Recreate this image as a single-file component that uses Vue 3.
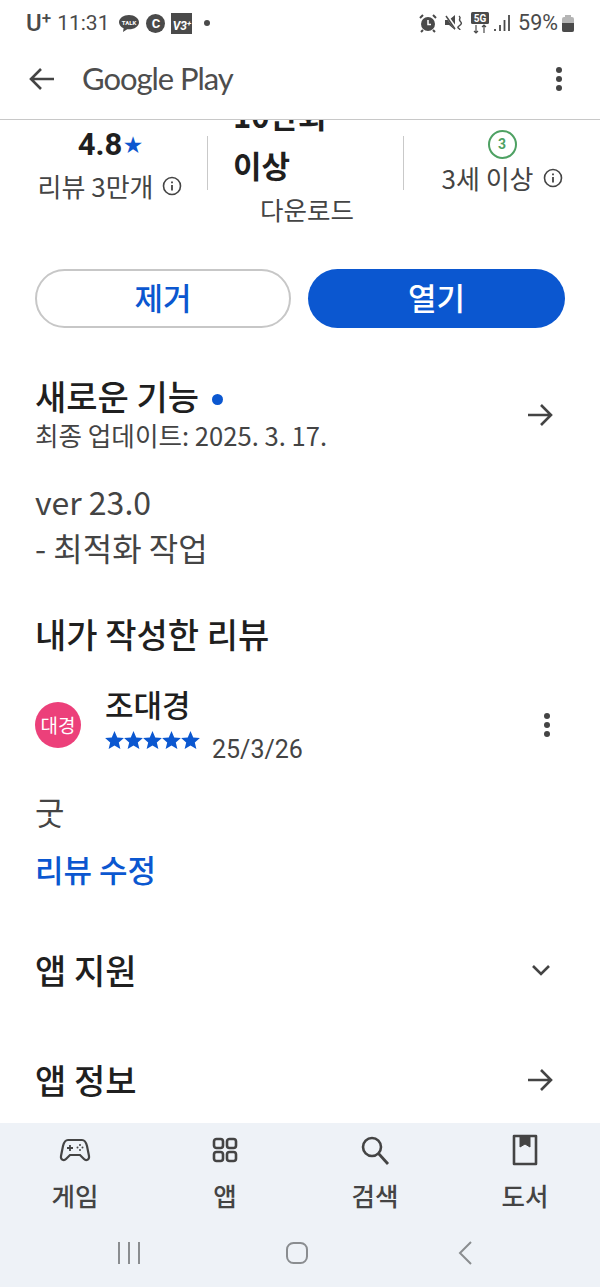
<script setup>
const navItems = [
  { label: '게임', icon: 'game' },
  { label: '앱', icon: 'apps' },
  { label: '검색', icon: 'search' },
  { label: '도서', icon: 'book' }
]
const stars = [1, 2, 3, 4, 5]
</script>

<template>
  <div class="phone">
    <div class="status">
      <div class="status-left">
        <span class="carrier">U<sup>+</sup></span>
        <span class="time">11:31</span>
        <svg class="si" width="22" height="20" viewBox="0 0 22 20"><path d="M11 2C5.500 2 1 5.200 1 9.200c0 2.600 1.900 4.800 4.600 6.100L5 19l4.200-2.800c.6.100 1.200.100 1.800.100 5.500 0 10-3.200 10-7.100S16.500 2 11 2z" fill="#4a4a4a"/><text x="11" y="11.500" class="talk">TALK</text></svg>
        <span class="c-badge">C</span>
        <span class="v-badge">V3<small>+</small></span>
        <span class="dot"></span>
      </div>
      <div class="status-right">
        <svg width="18" height="20" viewBox="0 0 18 20"><circle cx="9" cy="11" r="7" fill="#4a4a4a"/><path d="M1 5l3-3M17 5l-3-3M4 17l-2 2M14 17l2 2" stroke="#4a4a4a" stroke-width="2"/><path d="M9 7v4.500h3" stroke="#fff" stroke-width="1.500" fill="none"/></svg>
        <svg class="ml8" width="18" height="20" viewBox="0 0 18 20"><path d="M0 7h4l6-5v15l-6-5H0z" fill="#4a4a4a"/><path d="M1 2l11 15" stroke="#fff" stroke-width="3"/><path d="M1 3l9 13" stroke="#4a4a4a" stroke-width="1.500"/><path d="M14 3c3 2-1 3 1 5s2 3-1 5 1 2 1 4" stroke="#4a4a4a" stroke-width="1.500" fill="none"/></svg>
        <svg class="ml8" width="18" height="22" viewBox="0 0 18 22"><rect width="18" height="12" rx="1.500" fill="#4a4a4a"/><text x="9" y="10" class="fiveg">5G</text><path d="M5 13v8M3 19l2 2 2-2M13 21v-8M11 15l2-2 2 2" stroke="#4a4a4a" stroke-width="1.200" fill="none"/></svg>
        <svg class="ml5" width="16" height="18" viewBox="0 0 16 18"><path d="M1 15v2M6 11v6M10.500 6v11M15 1v16" stroke="#4a4a4a" stroke-width="1.800"/></svg>
        <span class="pct">59%</span>
        <span class="battery"><i></i></span>
      </div>
    </div>

    <header class="appbar">
      <svg width="26" height="24" viewBox="0 0 26 24"><path d="M25 12H2M12 2 2 12l10 10" stroke="#444" stroke-width="2.600" fill="none"/></svg>
      <span class="brand">Google Play</span>
      <span class="kebab"><i></i><i></i><i></i></span>
    </header>

    <main class="content">
      <section class="stats">
        <div class="stat first">
          <div class="rating">4.8<span class="star">★</span></div>
          <div class="stat-label">리뷰 3만개
            <svg class="info" width="20" height="20" viewBox="0 0 20 20"><circle cx="10" cy="10" r="8.500" fill="none" stroke="#444" stroke-width="1.600"/><path d="M10 9v5.500M10 5.500v1.800" stroke="#444" stroke-width="1.800"/></svg>
          </div>
        </div>
        <div class="stat second">
          <div class="downloads">10만회<br>이상</div>
          <div class="stat-label dl-label">다운로드</div>
        </div>
        <div class="stat third">
          <div class="age">3</div>
          <div class="stat-label">3세 이상
            <svg class="info" width="20" height="20" viewBox="0 0 20 20"><circle cx="10" cy="10" r="8.500" fill="none" stroke="#444" stroke-width="1.600"/><path d="M10 9v5.500M10 5.500v1.800" stroke="#444" stroke-width="1.800"/></svg>
          </div>
        </div>
      </section>

      <section class="actions">
        <button class="btn outline">제거</button>
        <button class="btn solid">열기</button>
      </section>

      <section class="whatsnew">
        <div class="row">
          <div>
            <h2>새로운 기능<span class="bluedot"></span></h2>
            <div class="updated">최종 업데이트: 2025. 3. 17.</div>
          </div>
          <svg class="arrow" width="26" height="24" viewBox="0 0 26 24"><path d="M1 12h22M14 2l10 10-10 10" stroke="#444" stroke-width="2.600" fill="none"/></svg>
        </div>
        <p class="notes">ver 23.0<br>- 최적화 작업</p>
      </section>

      <section class="review">
        <h2>내가 작성한 리뷰</h2>
        <div class="author">
          <div class="avatar">대경</div>
          <div class="who">
            <div class="name">조대경</div>
            <div class="meta">
              <span class="stars"><svg v-for="s in stars" :key="s" width="19" height="18" viewBox="0 0 24 23"><path d="M12 0l3.500 8.200 8.500.7-6.500 5.700 2 8.400-7.500-4.500L4.500 23l2-8.400L0 8.900l8.500-.7z" fill="#0b57d0"/></svg></span>
              <span class="date">25/3/26</span>
            </div>
          </div>
          <span class="kebab"><i></i><i></i><i></i></span>
        </div>
        <p class="body">굿</p>
        <div class="edit">리뷰 수정</div>
      </section>

      <section class="line first-line">
        <h2>앱 지원</h2>
        <svg class="chev" width="20" height="12" viewBox="0 0 20 12"><path d="M2 2l8 8 8-8" stroke="#444" stroke-width="2.600" fill="none"/></svg>
      </section>
      <section class="line second-line">
        <h2>앱 정보</h2>
        <svg class="arrow" width="26" height="24" viewBox="0 0 26 24"><path d="M1 12h22M14 2l10 10-10 10" stroke="#444" stroke-width="2.600" fill="none"/></svg>
      </section>
    </main>

    <nav class="tabs">
      <div v-for="n in navItems" :key="n.label" class="tab">
        <svg width="32" height="32" viewBox="0 0 32 32" fill="none" stroke="#444" stroke-width="2.200">
          <template v-if="n.icon === 'game'">
            <path d="M9 6h14c3 0 4 2 5 6l2 10c.6 4-3 5-5 3l-4-4h-10l-4 4c-2 2-5.600 1-5-3l2-10c1-4 2-6 5-6z"/>
            <path d="M8 14h6M11 11v6" stroke-width="1.800"/>
            <path d="M21 11v.1M21 16v.1M18.500 13.500v.1M23.500 13.500v.1" stroke-width="2" stroke-linecap="round"/>
          </template>
          <template v-else-if="n.icon === 'apps'">
            <rect x="5" y="5" width="9" height="9" rx="2.500" stroke-width="2.600"/><rect x="18" y="5" width="9" height="9" rx="2.500" stroke-width="2.600"/><rect x="5" y="18" width="9" height="9" rx="2.500" stroke-width="2.600"/><rect x="18" y="18" width="9" height="9" rx="2.500" stroke-width="2.600"/>
          </template>
          <template v-else-if="n.icon === 'search'">
            <circle cx="13" cy="13" r="9" stroke-width="2.600"/><path d="M19.500 19.500 29 30" stroke-width="2.800"/>
          </template>
          <template v-else>
            <path d="M5 2h22v28H5z" stroke-linejoin="round" stroke-width="2.600"/><path d="M11 2v11l5-3 5 3V2" fill="#444" stroke-width="1"/>
          </template>
        </svg>
        <span>{{ n.label }}</span>
      </div>
    </nav>

    <div class="sysnav">
      <svg width="24" height="26" viewBox="0 0 24 26"><path d="M2 2v22M12 2v22M22 2v22" stroke="#8a8d90" stroke-width="2"/></svg>
      <svg width="24" height="26" viewBox="0 0 24 26"><rect x="2" y="3" width="20" height="20" rx="6.500" fill="none" stroke="#8a8d90" stroke-width="2"/></svg>
      <svg width="16" height="26" viewBox="0 0 16 26"><path d="M14 2 3 13l11 11" stroke="#8a8d90" stroke-width="2" fill="none"/></svg>
    </div>
  </div>
</template>

<style scoped>
.phone { width: 600px; height: 1287px; display: flex; flex-direction: column; overflow: hidden; background: #fff; color: #1f1f1f; font-family: "Noto Sans CJK KR", "Noto Sans", sans-serif; }
h2 { margin: 0; font-size: 34px; font-weight: 500; line-height: 40px; color: #1f1f1f; white-space: nowrap; }
p { margin: 0; }

.status { height: 46px; flex: none; display: flex; justify-content: space-between; align-items: center; padding: 0 26px; color: #4a4a4a; }
.status-left, .status-right { display: flex; align-items: center; }
.carrier { font: 500 24px/1 "Roboto", sans-serif; }
.carrier sup { font-size: 17px; line-height: 0; vertical-align: 7px; }
.time { font: 400 21px/1 "Roboto", sans-serif; margin-left: 6px; }
.si { margin-left: 9px; }
.talk { font: 700 6px "Roboto", sans-serif; fill: #fff; text-anchor: middle; }
.fiveg { font: 700 10px "Roboto", sans-serif; fill: #fff; text-anchor: middle; }
.c-badge { width: 19px; height: 19px; border-radius: 50%; background: #4a4a4a; color: #fff; font: 700 13px/19px "Roboto", sans-serif; text-align: center; margin-left: 6px; }
.v-badge { width: 21px; height: 21px; background: #4a4a4a; color: #fff; font: italic 700 12px/21px "Roboto", sans-serif; text-align: center; margin-left: 6px; white-space: nowrap; overflow: hidden; }
.v-badge small { font-size: 8px; vertical-align: 4px; }
.dot { width: 6px; height: 6px; border-radius: 50%; background: #4a4a4a; margin-left: 12px; }
.ml8 { margin-left: 8px; }
.ml5 { margin-left: 5px; }
.pct { font: 400 21.500px/1 "Roboto", sans-serif; margin-left: 8px; }
.battery { width: 12px; height: 15px; border-radius: 2px; background: #b5b5b5; position: relative; margin: 2px 0 0 4px; }
.battery::before { content: ""; position: absolute; top: -2px; left: 3px; width: 6px; height: 2px; background: #b5b5b5; }
.battery i { position: absolute; left: 0; right: 0; bottom: 0; height: 9px; border-radius: 0 0 2px 2px; background: #4a4a4a; }

.appbar { height: 74px; flex: none; box-sizing: border-box; display: flex; align-items: center; padding: 0 38px 8px 29px; border-bottom: 1px solid #c8c8c8; position: relative; z-index: 2; background: #fff; }
.brand { font: 400 31px/1 "Lato", sans-serif; color: #4d4d4d; margin-left: 27px; letter-spacing: -1.050px; flex: 1; }
.kebab { width: 6px; display: flex; flex-direction: column; gap: 3px; flex: none; }
.kebab i { width: 6px; height: 6px; border-radius: 50%; background: #444; }

.content { flex: 1; min-height: 0; overflow: hidden; padding: 0 35px; display: flex; flex-direction: column; }

.stats { flex: none; height: 149px; margin: 0 -35px; display: grid; grid-template-columns: 207px 197px 196px; }
.stat { display: flex; flex-direction: column; align-items: center; position: relative; }
.stat-label { font-size: 26px; line-height: 32px; color: #444; display: flex; align-items: center; gap: 9px; white-space: nowrap; }
.first { padding: 6px 0 0 13px; }
.rating { font: 700 31px/38px "Roboto", sans-serif; color: #1f1f1f; white-space: nowrap; }
.star { color: #0b57d0; font-size: 20px; margin-left: 2px; vertical-align: 3px; }
.first .stat-label { margin-top: 6px; }
.second { align-items: flex-start; height: 54px; border-left: 1px solid #c9c9c9; border-right: 1px solid #c9c9c9; margin-top: 16px; }
.downloads { font-size: 31px; font-weight: 700; line-height: 50px; margin: -46px 0 0 25px; color: #1f1f1f; white-space: nowrap; }
.dl-label { margin: 3px 0 0 52px; font-size: 25.500px; }
.third { padding-top: 10px; }
.age { width: 25px; height: 25px; border: 2.500px solid #4ea163; border-radius: 50%; color: #4ea163; font: 700 14px/25px "Roboto", sans-serif; text-align: center; }
.third .stat-label { margin-top: 3px; }

.actions { flex: none; display: grid; grid-template-columns: 256px 257px; gap: 17px; }
.btn { height: 59px; border-radius: 30px; padding: 0 0 5px; font: 500 31px/1 "Noto Sans CJK KR", sans-serif; box-sizing: border-box; }
.outline { background: #fff; border: 2px solid #c7c7c7; color: #0b57d0; }
.solid { background: #0b57d0; border: 0; color: #fff; }

.whatsnew { flex: none; margin-top: 48px; }
.row { display: flex; justify-content: space-between; align-items: center; padding-right: 12px; }
.row .arrow { margin-top: 2px; }
.bluedot { display: inline-block; width: 11px; height: 11px; border-radius: 50%; background: #0b57d0; margin-left: 13px; vertical-align: 5px; }
.updated { font-size: 25.600px; line-height: 34px; color: #444; margin-top: 2px; white-space: nowrap; }
.notes { margin-top: 26px; font-size: 32px; line-height: 46px; color: #444; }

.review { flex: none; margin-top: 44px; }
.author { display: flex; align-items: flex-start; margin-top: 31px; padding-right: 15px; }
.avatar { width: 46px; height: 46px; margin-top: 17px; border-radius: 50%; background: #ec407a; color: #fff; font-size: 19px; line-height: 46px; text-align: center; flex: none; }
.author .kebab { margin-top: 28px; }
.who { margin-left: 24px; flex: 1; }
.name { font-size: 31px; font-weight: 500; line-height: 38px; }
.meta { display: flex; align-items: flex-start; }
.stars { display: flex; margin-top: 8px; }
.date { font: 400 25px/30px "Roboto", sans-serif; color: #444; margin: 12px 0 0 12px; }
.body { margin-top: 25px; font-size: 32px; line-height: 42px; color: #444; }
.edit { margin-top: 16px; font-size: 31px; font-weight: 500; line-height: 42px; color: #0b57d0; }

.line { flex: none; display: flex; justify-content: space-between; align-items: center; padding-right: 12px; }
.first-line { margin-top: 60px; }
.second-line { margin-top: 70px; }
.chev { margin-right: 2px; }

.tabs { flex: none; height: 101px; background: #eef2f7; display: grid; grid-template-columns: repeat(4, 150px); }
.tab { display: flex; flex-direction: column; align-items: center; padding-top: 11px; font-size: 25.500px; font-weight: 500; color: #444; }
.tab span { line-height: 34px; margin-top: 12px; }
.sysnav { flex: none; height: 63px; background: #eef2f7; display: grid; grid-template-columns: repeat(3, 168px); justify-items: center; align-items: start; padding: 16px 0 0 45px; box-sizing: border-box; }
</style>
